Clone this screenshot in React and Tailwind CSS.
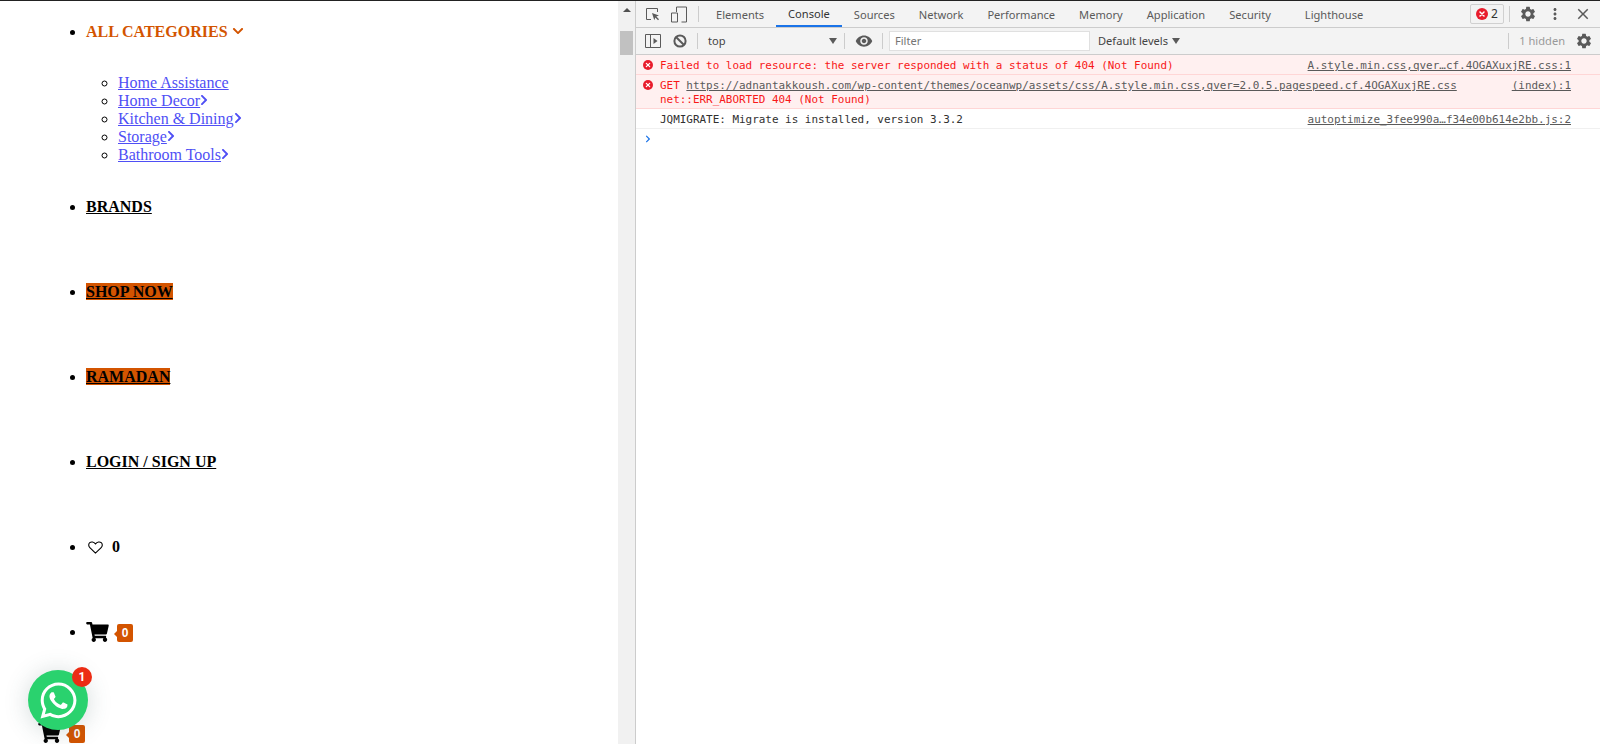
import React from 'react';
import { FaChevronDown, FaChevronRight, FaShoppingCart, FaWhatsapp } from 'react-icons/fa';
import { MdSettings, MdClose, MdMoreVert, MdRemoveRedEye } from 'react-icons/md';

const subLinks = [
  { label: 'Home Assistance' },
  { label: 'Home Decor', more: true },
  { label: 'Kitchen & Dining', more: true },
  { label: 'Storage', more: true },
  { label: 'Bathroom Tools', more: true },
];

const tabs = ['Elements', 'Console', 'Sources', 'Network', 'Performance', 'Memory', 'Application', 'Security'];

const CartBadge = () => (
  <span className="relative top-px ml-[8px] inline-flex h-[18px] w-4 items-center justify-center rounded-[2px] bg-[#d35400] font-['Liberation_Sans',sans-serif] text-[12px] font-bold text-white">
    <span className="absolute left-[-3px] top-[7px] h-0 w-0 border-y-[3px] border-r-[3px] border-y-transparent border-r-[#d35400]"></span>
    0
  </span>
);

const ErrorDot = ({ size = 'h-3 w-3' }) => (
  <svg viewBox="0 0 12 12" className={`${size} shrink-0`}>
    <circle cx="6" cy="6" r="6" fill="#e81c2c" />
    <path d="M4 4l4 4M8 4l-4 4" stroke="#fff" strokeWidth="1.5" strokeLinecap="round" />
  </svg>
);

const Divider = () => <div className="h-[16px] w-px bg-[#ccc]"></div>;

const SitePane = () => (
  <div className="relative h-full w-[618px] shrink-0 overflow-hidden bg-white font-['Liberation_Serif',serif] text-base leading-[18px] text-black">
    <ul className="list-disc pl-[86px] pt-[22px]">
      <li className="pb-[34px]">
        <a className="font-bold text-[#d35400]">
          ALL CATEGORIES
          <FaChevronDown className="ml-1 inline-block h-3 w-3 align-[0px]" />
        </a>
        <ul className="mt-[33px] list-[circle] pl-8 marker:text-black">
          {subLinks.map((link) => (
            <li key={link.label} className="h-[18px] text-[#4f4ff5]">
              <a className="underline">{link.label}</a>
              {link.more && <FaChevronRight className="inline-block h-3 w-2 align-[0px]" />}
            </li>
          ))}
        </ul>
      </li>
      <li className="pb-[67px] font-bold"><a className="underline">BRANDS</a></li>
      <li className="pb-[67px] font-bold"><a className="bg-[#d35400] underline">SHOP NOW</a></li>
      <li className="pb-[67px] font-bold"><a className="bg-[#d35400] underline">RAMADAN</a></li>
      <li className="pb-[67px] font-bold"><a className="underline">LOGIN / SIGN UP</a></li>
      <li className="pb-[67px] font-bold">
        <span className="inline-flex h-[18px] items-center align-top">
          <svg viewBox="0 0 16 14" className="ml-[2px] h-[13px] w-[15px]" fill="none" stroke="#000" strokeWidth="1.2">
            <path d="M8 13L1.9 7.1C.2 5.4.4 3 1.8 1.8 3.4.5 6 .7 8 3.2c2-2.5 4.6-2.7 6.2-1.4 1.4 1.2 1.6 3.6-.1 5.3z" />
          </svg>
          <span className="ml-[9px]">0</span>
        </span>
      </li>
      <li className="font-bold">
        <span className="inline-flex h-[18px] items-center align-top">
          <FaShoppingCart className="h-[20px] w-[23px]" />
          <CartBadge />
        </span>
      </li>
    </ul>

    <div className="mt-[82px] flex items-center pl-[38px]">
      <FaShoppingCart className="h-[20px] w-[23px]" />
      <CartBadge />
    </div>

    {/* Chat button floats over the page */}
    <div className="absolute left-[28px] top-[669px] flex h-[60px] w-[60px] items-center justify-center rounded-full bg-[#2ad26e] shadow-[0_2px_24px_rgba(60,90,90,0.22)]">
      <FaWhatsapp className="h-[41px] w-[41px] text-white" />
      <span className="absolute left-[44px] top-[-3px] flex h-5 w-5 items-center justify-center rounded-full bg-[#ec2c14] font-['Roboto',sans-serif] text-xs font-bold text-white">
        1
      </span>
    </div>
  </div>
);

const ScrollTrack = () => (
  <div className="h-full w-[17px] shrink-0 bg-[#f1f1f1]">
    <div className="mx-auto mt-[7px] h-0 w-0 border-x-[4px] border-b-[4px] border-x-transparent border-b-[#505050]"></div>
    <div className="mx-auto mt-[19px] h-[24px] w-[13px] bg-[#c1c1c1]"></div>
  </div>
);

const TopBar = () => (
  <div className="flex h-[27px] shrink-0 items-center border-b border-[#ccc] bg-[#f3f3f3] pl-[9px]">
    <svg viewBox="0 0 16 16" className="h-4 w-4" fill="none" stroke="#5a5a5a" strokeWidth="1">
      <path d="M6 13.5H1.5v-11h11V6" />
      <path d="M7 7l7 2.6-2.7 1 2.7 2.7-1 1-2.7-2.7-1 2.7z" fill="#5a5a5a" stroke="none" />
    </svg>
    <svg viewBox="0 0 16 16" className="ml-[10px] h-[17px] w-[16px]" fill="none" stroke="#5a5a5a" strokeWidth="1">
      <path d="M5.5 5.5V.5h10v15h-5" />
      <path d="M.5 6.5h6v9h-6z" />
    </svg>
    <div className="ml-[11px] mr-[5px]"><Divider /></div>
    <div className="flex h-full items-center font-['Noto_Sans',sans-serif] text-[11.1px] text-[#5a5a5a]">
      {tabs.map((tab) => (
        <div
          key={tab}
          className={
            tab === 'Console'
              ? 'flex h-full items-center border-b-2 border-[#1a73e8] px-3 pt-[2px] text-[#333]'
              : 'flex h-full items-center px-3 pt-[2px]'
          }
        >
          {tab}
        </div>
      ))}
      <div className="ml-[10px] px-3 pt-[2px]">Lighthouse</div>
    </div>
    <div className="ml-auto flex items-center pr-[8px]">
      <div className="flex h-[20px] w-[34px] items-center justify-center gap-[3px] rounded-[2px] border border-[#d0d0d0] font-['Noto_Sans',sans-serif] text-xs text-[#333]">
        <ErrorDot />2
      </div>
      <div className="ml-[5px]"><Divider /></div>
      <MdSettings className="ml-[9px] h-[18px] w-[18px] text-[#5a5a5a]" />
      <MdMoreVert className="ml-[9px] h-[18px] w-[18px] text-[#5a5a5a]" />
      <MdClose className="ml-[10px] h-[18px] w-[18px] text-[#5a5a5a]" />
    </div>
  </div>
);

const FilterBar = () => (
  <div className="flex h-[27px] shrink-0 items-center border-b border-[#ccc] bg-[#f3f3f3] pl-[9px] font-['Noto_Sans',sans-serif] text-[11.1px] text-[#444]">
    <svg viewBox="0 0 16 14" className="h-[14px] w-[16px]" fill="none" stroke="#5a5a5a" strokeWidth="1">
      <path d="M.5.5h15v13H.5zM5.5.5v13" />
      <path d="M8.5 4l4 3-4 3z" fill="#5a5a5a" stroke="none" />
    </svg>
    <svg viewBox="0 0 14 14" className="ml-[12px] h-[14px] w-[14px]" fill="none" stroke="#5a5a5a" strokeWidth="2">
      <circle cx="7" cy="7" r="5.6" />
      <path d="M3 3l8 8" />
    </svg>
    <div className="ml-[10px]"><Divider /></div>
    <span className="ml-[10px] w-[121px]">top</span>
    <span className="h-0 w-0 border-x-[4px] border-t-[6px] border-x-transparent border-t-[#5a5a5a]"></span>
    <div className="ml-[7px]"><Divider /></div>
    <MdRemoveRedEye className="ml-[10px] h-[18px] w-[18px] text-[#5a5a5a]" />
    <div className="ml-[9px]"><Divider /></div>
    <div className="ml-[6px] flex h-[20px] w-[201px] items-center border border-[#e0e0e0] bg-white pl-[5px] text-[#757575]">Filter</div>
    <span className="ml-[8px]">Default levels</span>
    <span className="ml-[4px] h-0 w-0 border-x-[4px] border-t-[6px] border-x-transparent border-t-[#5a5a5a]"></span>
    <div className="ml-auto flex items-center pr-[7px]">
      <Divider />
      <span className="ml-[10px] text-[#999]">1 hidden</span>
      <MdSettings className="ml-[10px] h-[18px] w-[18px] text-[#5a5a5a]" />
    </div>
  </div>
);

const ConsoleRow = ({ error, source, tall, children }) => (
  <div
    className={`flex border-b pl-[24px] pr-[29px] ${
      error ? 'border-[#ffd6d6] bg-[#fff0f0] text-[#f81818]' : 'border-[#f0f0f0] bg-white text-[#303030]'
    } ${tall ? 'h-[34px]' : 'h-[20px]'} relative pt-[4px] leading-[14px]`}
  >
    {error && (
      <span className="absolute left-[7px] top-[5px]">
        <ErrorDot size="h-[10px] w-[10px]" />
      </span>
    )}
    <div className="flex-1 whitespace-pre">{children}</div>
    <a className="text-[#5a5a5a] underline">{source}</a>
  </div>
);

const DevTools = () => (
  <div className="flex h-full min-w-0 flex-1 flex-col border-l border-[#ccc] bg-white">
    <TopBar />
    <FilterBar />
    <div className="font-['DejaVu_Sans_Mono',monospace] text-[10.95px]">
      <ConsoleRow error source="A.style.min.css,qver…cf.4OGAXuxjRE.css:1">
        Failed to load resource: the server responded with a status of 404 (Not Found)
      </ConsoleRow>
      <ConsoleRow error tall source="(index):1">
        GET <a className="text-[#5a5a5a] underline">https://adnantakkoush.com/wp-content/themes/oceanwp/assets/css/A.style.min.css,qver=2.0.5.pagespeed.cf.4OGAXuxjRE.css</a>
        {'\n'}net::ERR_ABORTED 404 (Not Found)
      </ConsoleRow>
      <ConsoleRow source="autoptimize_3fee990a…f34e00b614e2bb.js:2">
        JQMIGRATE: Migrate is installed, version 3.3.2
      </ConsoleRow>
      <div className="pl-[9px] pt-[6px]">
        <FaChevronRight className="h-[8px] w-[6px] text-[#1a73e8]" />
      </div>
    </div>
  </div>
);

export default function App() {
  return (
    <div className="flex h-[744px] w-[1600px] flex-col overflow-hidden bg-white">
      <div className="h-px shrink-0 bg-[#222]"></div>
      <div className="flex min-h-0 flex-1">
        <SitePane />
        <ScrollTrack />
        <DevTools />
      </div>
    </div>
  );
}
